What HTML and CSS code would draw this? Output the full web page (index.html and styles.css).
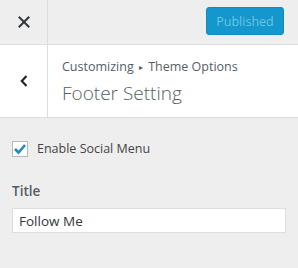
FILE: index.html
```html
<!DOCTYPE html>
<html lang="en">
<head>
  <meta charset="UTF-8" />
  <title>Customizer - Footer Setting</title>
  <link rel="stylesheet" href="styles.css">
</head>
<body>
  <div class="panel">
    <header class="topbar">
      <button class="close-btn" aria-label="Close">
        <svg width="12" height="12" viewBox="0 0 12 12"><path d="M1.5 1.5 L10.5 10.5 M10.5 1.5 L1.5 10.5" stroke="#32373c" stroke-width="2" stroke-linecap="square"/></svg>
      </button>
      <div class="topbar-actions">
        <button class="publish-btn" disabled>Published</button>
      </div>
    </header>

    <div class="section-head">
      <button class="back-btn" aria-label="Back">
        <svg width="10" height="14" viewBox="0 0 10 14"><path d="M7.5 2 L2.8 7 L7.5 12" fill="none" stroke="#23282d" stroke-width="2.2"/></svg>
      </button>
      <div class="section-title">
        <span class="crumbs">Customizing <span class="sep">&#9656;</span> Theme Options</span>
        <h3>Footer Setting</h3>
      </div>
    </div>

    <div class="controls">
      <label class="check-row">
        <span class="checkbox">
          <svg width="14" height="12" viewBox="0 0 14 12"><path d="M2 6 L5.5 9.5 L12 2" fill="none" stroke="#1e8cbe" stroke-width="2.6"/></svg>
        </span>
        Enable Social Menu
      </label>

      <div class="field">
        <span class="field-label">Title</span>
        <input type="text" class="text-input" value="Follow Me">
      </div>
    </div>
  </div>
</body>
</html>
```

FILE: styles.css
```css
* {
  margin: 0; padding: 0; box-sizing: border-box;
}
body {
  background: #eeeeee;
  font-family: "Open Sans", "Noto Sans", sans-serif;
  font-size: 13px;
  color: #555d66;
}
.panel {
  width: 298px;
  height: 268px;
  background: #eeeeee;
}
.topbar {
  display: flex;
  height: 45px;
  border-bottom: 1px solid #dddddd;
  background: #eeeeee;
}
.close-btn {
  width: 48px;
  border: none;
  border-right: 1px solid #dddddd;
  background: #eeeeee;
  display: flex;
  align-items: center;
  justify-content: center;
}
.topbar-actions {
  flex: 1;
  display: flex;
  justify-content: flex-end;
  align-items: center;
  padding-right: 14px;
}
.publish-btn {
  width: 78px;
  height: 28px;
  margin-top: -2px;
  background: #1497cc;
  border: 1px solid #0f8cbe;
  border-radius: 3px;
  color: #6cc3e6;
  font-family: inherit;
  font-size: 12.5px;
}
.section-head {
  display: flex;
  height: 73px;
  background: #ffffff;
  border-bottom: 1px solid #dddddd;
}
.back-btn {
  width: 48px;
  border: none;
  border-right: 1px solid #dddddd;
  background: #ffffff;
  display: flex;
  align-items: center;
  justify-content: center;
}
.section-title {
  padding: 13px 0 0 14px;
  display: flex;
  flex-direction: column;
}
.crumbs {
  font-size: 12.5px;
  color: #555d66;
  line-height: 18px;
}
.crumbs .sep {
  font-size: 8px;
  vertical-align: 1px;
  margin: 0 2px;
}
.section-title h3 {
  font-size: 19px;
  font-weight: 300;
  color: #555d66;
  line-height: 28px;
  margin-top: 3px;
}
.controls {
  padding: 22px 12px 0 12px;
}
.check-row {
  display: flex;
  align-items: center;
  gap: 9px;
  font-size: 12.5px;
  color: #444;
}
.checkbox {
  width: 16px;
  height: 16px;
  background: #fff;
  border: 1px solid #b4b9be;
  display: flex;
  align-items: center;
  justify-content: center;
}
.field {
  margin-top: 24px;
  display: flex;
  flex-direction: column;
}
.field-label {
  font-size: 13.5px;
  font-weight: 600;
  color: #555d66;
  line-height: 20px;
  margin-bottom: 7px;
}
.text-input {
  width: 274px;
  height: 25px;
  border: 1px solid #dddddd;
  background: #fff;
  font-family: inherit;
  font-size: 13.5px;
  color: #32373c;
  padding: 0 6px;
}
```
